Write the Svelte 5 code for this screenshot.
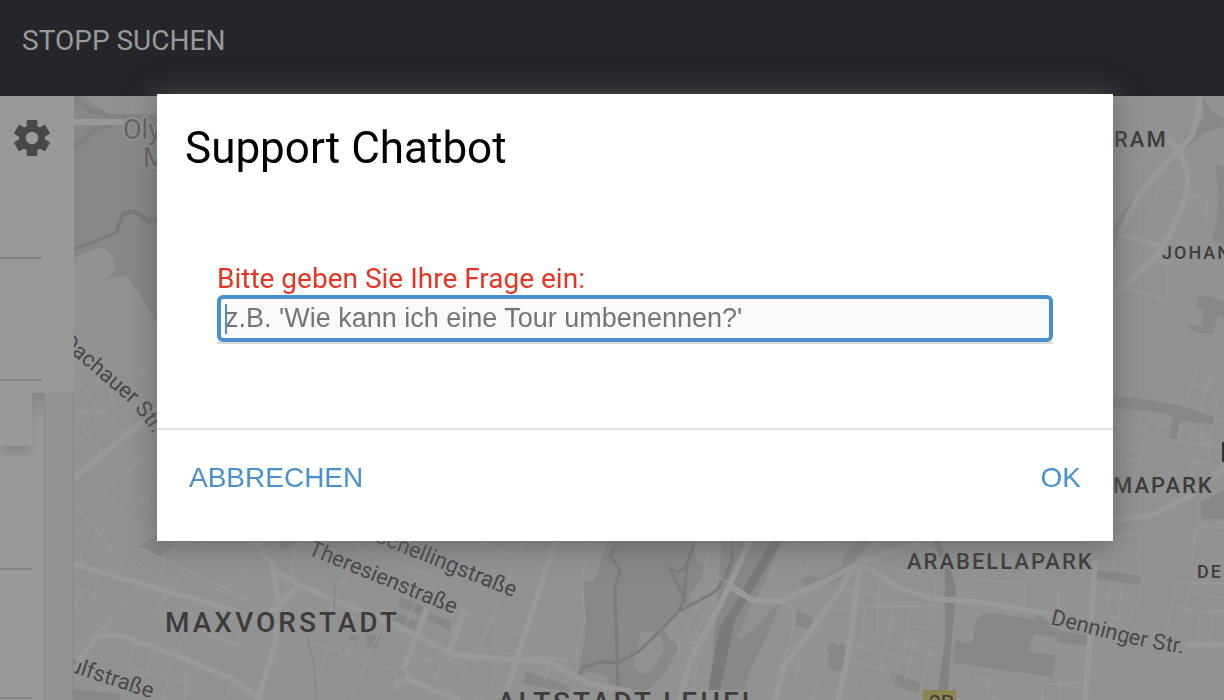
<script>
  let question = $state('');

  const parks = [
    'M74 96H157V322L127 275L105 280L117 268L113 257L104 248L92 250L74 258Z',
    'M74 689L120 694V700H74Z',
    'M138 547L156 534H175L170 550L157 557Z',
    'M276 541H300L284 550Z',
    'M400 597L427 608L424 617L398 606Z',
    'M428 612L452 622L449 630L427 619Z',
    'M395 612L420 622L416 631L392 620Z',
    'M366 634L382 634L376 649L366 645Z',
    'M350 634L360 636L356 641L348 639Z',
    'M526 671L570 686V692L522 684Z',
    'M608 541H692L697 560L705 567L700 580L688 598L695 602L680 607L663 628L668 636L679 648L662 676L648 690H612L576 680L585 640L583 581L594 582Z',
    'M722 541H782L758 595L740 632L735 635L742 639L755 622L780 603L765 640L750 670L744 690H710L715 625Z',
    'M857 541H870L840 580L815 588L805 588L802 580L814 574L817 580L842 567L845 555Z',
    'M796 610L814 618L809 630L795 625Z',
    'M831 641L848 646L845 670L835 671L827 666L829 652L826 650Z',
    'M894 672L922 684L918 693L890 684Z',
    'M975 622L982 614L993 613L1036 620L1038 613L1046 620L1058 630L1087 636V646L1058 642L1057 637L1034 634L1028 650L1033 653L1056 655L1052 677L954 663L955 641L973 643Z',
    'M1097 570L1141 576L1140 585L1096 579Z',
    'M1113 397L1138 398L1178 405L1214 417L1213 424L1181 421L1176 440L1169 438L1173 416L1150 411L1113 408Z',
    'M1204 310H1219L1213 334L1200 333L1187 328L1189 324L1202 327Z',
    'M1199 294L1224 301V318L1195 307Z',
    'M1215 164L1224 167V245L1212 238L1217 220L1219 194Z',
    'M1202 96L1212 112L1224 118V126L1205 132L1196 141L1185 148L1184 137L1197 128L1204 117Z',
    'M1113 226L1143 184L1136 200L1113 249Z',
    'M1200 503L1224 490V519H1202Z'
  ];

  const clearings = [
    'M84 96H157V116H115L98 108Z',
    'M633 665L641 632L660 632L664 650L652 671L643 675Z',
    'M575 682L588 672L606 676L612 690H576Z',
    'M740 632L750 605L778 602L755 629L745 635Z'
  ];

  const water = [
    'M115 230L122 211L135 209L148 218L157 216V221L148 225L134 214L124 216L119 230Z',
    'M771 541H782L735 619L720 690H708L719 629L738 598Z'
  ];

  const motorway = 'M933 541H939L950 566L956 590L954 612L948 690H938L945 640L945 570Z';

  const streams = [
    'M74 249L94 242L119 231',
    'M618 541L610 556L620 570L615 587L618 690',
    'M578 676L584 667L600 662L617 663L638 652L664 627L679 611L697 602L716 591L726 575L732 560V542',
    'M695 541L687 565L684 598L670 569L678 572L688 565',
    'M684 598L679 611'
  ];

  const arterials = [
    'M74 478L135 428L157 410',
    'M74 564L225 608L262 620L300 585',
    'M74 667L97 637L115 634L175 655L230 678L262 700',
    'M254 541L272 563L279 605L276 640L258 700',
    'M272 570L310 590L395 625L455 655L550 662L590 684L630 692',
    'M555 541L536 600L515 665L505 695',
    'M465 610L450 650',
    'M427 608L415 640L395 690',
    'M395 675L460 700',
    'M750 541L720 605L690 660L680 700',
    'M728 585L752 600L780 601L830 579L855 565L900 549L920 545',
    'M855 565L840 590L815 625L785 665L775 700',
    'M860 565L855 600L852 630L845 670L838 700',
    'M862 565L900 588L935 599L980 602L1035 611L1080 622L1110 640',
    'M1095 560L1090 640L1085 700',
    'M1200 96L1198 115L1192 135L1180 149L1155 175L1138 196L1120 234',
    'M1168 139L1180 151L1188 175L1187 194L1170 235L1155 257L1113 296',
    'M1120 234L1160 246',
    'M1113 520L1150 516L1192 495L1224 467',
    'M1185 645L1224 645'
  ];

  const streets = [
    'M74 379L90 394L98 412L82 420L74 426', 'M81 372L88 360M90 394L100 377', 'M110 390L115 411',
    'M74 412H98L106 413L121 433L133 425', 'M106 413V419L74 444', 'M74 418L108 457',
    'M137 377L147 373L152 378H157', 'M128 474L140 460L157 478',
    'M157 457H140L128 470L106 488L107 495L127 516L157 490', 'M90 524L112 505',
    'M74 504L121 560L118 575', 'M97 537L83 551L80 563', 'M74 531L97 537L111 520',
    'M138 547L250 600', 'M165 559L157 590', 'M203 541L155 612', 'M248 570L207 603', 'M262 580L235 645',
    'M185 575L219 590L250 603', 'M74 586L180 622L240 645', 'M100 575L92 596L112 618L105 630',
    'M85 590L74 605', 'M74 605L84 615L108 632', 'M137 588L110 620L74 652', 'M165 595L157 612',
    'M190 625L175 655', 'M135 645L128 668L185 682', 'M153 650L148 672', 'M172 655L163 700',
    'M187 661L185 700', 'M235 682L225 700', 'M210 635L320 680', 'M298 541L285 600L325 615',
    'M360 541L340 590L315 640', 'M355 547L440 580', 'M370 560L350 587', 'M338 582L365 593',
    'M410 653L440 665', 'M455 655L435 675L405 665', 'M300 640L370 660L440 690',
    'M380 630L350 700', 'M330 645L320 670', 'M420 590L400 640',
    'M480 541L535 565', 'M524 541L500 600L478 650', 'M468 613L520 635',
    'M495 627L493 640L497 652L570 660', 'M590 541L582 580L585 620L573 665', 'M550 661L545 680',
    'M465 665L460 690L485 700', 'M496 663L490 693',
    'M710 541L705 570L745 592', 'M700 602L680 640L678 660L683 676', 'M708 607L692 640',
    'M678 642L709 643M686 632L702 637M664 676L685 683M690 659L706 663M697 663L694 690',
    'M800 541L770 575L785 582M828 541L795 580L775 595', 'M838 541L845 553M880 541L860 560',
    'M805 595L830 610M788 601L795 615L790 645L765 700', 'M765 648L785 655',
    'M832 610L863 607L935 606M865 607L862 640M878 606V632L877 642',
    'M815 627L840 646M847 590L878 594M880 582L878 606',
    'M862 630L935 655M892 607L890 632L880 670M910 608L905 650L890 690',
    'M850 645L912 660M850 660L890 672M790 665L820 680L810 700M800 655L795 682M840 675L875 700',
    'M907 616H935M908 625L932 630M905 638L935 645M915 640L905 680M930 650L920 690M862 560L935 578L935 599',
    'M968 541V578L1025 584L1024 605M1070 580L1058 590V610',
    'M960 690L975 679H995L1022 693M987 680V694L1000 700M1042 700V684L1080 683M1060 684V700',
    'M1106 535H1139V575M1120 535L1112 567M1110 585L1108 610M1122 587L1118 618M1140 586L1139 606L1132 608L1130 620L1096 612',
    'M1195 530L1192 562M1224 583H1175L1172 605L1166 630M1187 591L1224 598M1174 605L1200 612L1224 611M1192 583L1185 608M1200 612L1197 642M1213 611L1210 645',
    'M1113 174L1125 181L1150 150L1160 140', 'M1168 187L1192 196H1206L1207 218L1200 235L1175 228L1147 217L1158 192L1168 187',
    'M1155 261L1184 267L1188 261M1127 288L1167 300L1168 265M1177 240L1213 262L1224 264',
    'M1195 373L1224 382M1192 384L1212 390L1217 404L1214 416M1195 373L1185 407M1210 378L1201 410',
    'M1113 425H1127L1172 440L1200 444L1219 445M1147 422L1170 427M1148 422L1137 470L1133 480M1113 446L1138 450M1122 449L1121 460L1138 461M1182 423L1178 438M1193 423L1190 441M1203 424L1202 444M1212 425L1208 462L1192 463V475M1186 464L1192 462M1214 418L1224 421',
    'M1195 497L1199 505L1194 548M1196 526L1224 528M1209 527V532L1224 534'
  ];

  const districts = [
    { name: 'MAXVORSTADT', x: 165, y: 632, size: 'large' },
    { name: 'ALTSTADT-LEHEL', x: 497, y: 712, size: 'large' },
    { name: 'ARABELLAPARK', x: 907, y: 569, size: 'medium' },
    { name: 'RAM', x: 1114, y: 147, size: 'medium' },
    { name: 'MAPARK', x: 1113, y: 493, size: 'medium' },
    { name: 'JOHAN', x: 1162, y: 259, size: 'small' },
    { name: 'DE', x: 1197, y: 578, size: 'small' }
  ];

  const streetNames = [
    { id: 'dachauer', name: 'Dachauer Str.', d: 'M60 344L128 402Q142 415 166 454' },
    { id: 'schelling', name: 'Schellingstraße', d: 'M373 541L562 617' },
    { id: 'theresien', name: 'Theresienstraße', d: 'M307 554L497 632' },
    { id: 'denninger', name: 'Denninger Str.', d: 'M1050 624L1130 644Q1160 650 1220 660' },
    { id: 'arnulf', name: 'ulfstraße', d: 'M68 671L180 708' }
  ];
</script>

<div class="page">
  <header>
    <a class="search" href="#suche">STOPP SUCHEN</a>
  </header>

  <main>
    <aside>
      <section class="tools">
        <button class="settings" aria-label="Einstellungen">
          <svg viewBox="-18 -18 36 36" aria-hidden="true">
            <g fill="#484848">
              <circle r="13" />
              {#each [0, 60, 120] as angle}
                <rect x="-5.3" y="-18" width="10.6" height="36" rx="1" transform="rotate({angle})" />
              {/each}
            </g>
            <circle r="6.2" fill="#999" />
          </svg>
        </button>
        <span class="rule first"></span>
        <span class="rule second"></span>
      </section>
      <section class="list">
        <div class="entries">
          <div class="card"></div>
          <div class="entry"></div>
          <div class="entry next"></div>
        </div>
        <div class="track"></div>
      </section>
    </aside>

    <svg class="map" viewBox="74 96 1150 604" preserveAspectRatio="xMinYMin slice" role="img" aria-label="Karte">
      {#each parks as d}<path {d} fill="#888" />{/each}
      {#each clearings as d}<path {d} fill="#919191" />{/each}
      <path d="M74 98L88 109L112 117L157 118M74 148L92 132L112 124" fill="none" stroke="#828282" stroke-width="6" />
      {#each water as d}<path {d} fill="#7a7a7a" />{/each}
      <path d={motorway} fill="#828282" />
      {#each streams as d}<path {d} class="stream" />{/each}
      {#each streets as d}<path {d} class="street" />{/each}
      {#each arterials as d}<path {d} class="arterial" />{/each}
      <path d="M74 122H124" class="arterial" />
      <path d="M335 583L334 605L341 630M307 635L314 665L316 700" fill="none" stroke="#898989" stroke-width="2" />
      <circle cx="344" cy="649" r="5" class="circus" />
      <circle cx="401" cy="674" r="6" class="circus" />

      <text class="place" x="123" y="139">Oly</text>
      <text class="place" x="143" y="167">M</text>
      {#each streetNames as s}
        <path id={s.id} d={s.d} fill="none" />
        <text class="road"><textPath href="#{s.id}">{s.name}</textPath></text>
      {/each}
      {#each districts as p}
        <text class="district {p.size}" x={p.x} y={p.y}>{p.name}</text>
      {/each}
      <rect x="1222" y="442" width="2" height="20" fill="#333" />
      <rect x="923" y="690" width="33" height="12" fill="#8b8550" />
      <text class="badge" x="929" y="710">2R</text>
    </svg>
  </main>

  <div class="overlay">
    <form class="dialog" role="dialog" aria-labelledby="dialog-title" onsubmit={(e) => e.preventDefault()}>
      <h1 id="dialog-title">Support Chatbot</h1>
      <div class="field">
        <label for="question">Bitte geben Sie Ihre Frage ein:</label>
        <div class="control">
          <input id="question" type="text" placeholder="z.B. 'Wie kann ich eine Tour umbenennen?'" bind:value={question} />
          <span class="caret"></span>
        </div>
      </div>
      <footer>
        <button type="button">ABBRECHEN</button>
        <button type="submit">OK</button>
      </footer>
    </form>
  </div>
</div>

<style>
  :global(body) { margin: 0; }
  * { box-sizing: border-box; }
  .page {
    display: flex;
    flex-direction: column;
    min-height: 100vh;
    max-height: 100vh;
    overflow: hidden;
    font-family: Roboto, sans-serif;
    background: #929292;
  }
  header {
    display: flex;
    flex: none;
    padding: 25px 22px 39px;
    background: #25262b;
  }
  .search {
    color: #999;
    font-size: 28px;
    line-height: 32px;
    text-decoration: none;
  }
  main { display: flex; flex: 1; min-height: 0; }
  aside {
    display: flex;
    flex-direction: column;
    flex: none;
    width: 74px;
    background: #999;
  }
  .tools { display: flex; flex-direction: column; height: 297px; }
  .settings {
    width: 36px;
    height: 36px;
    margin: 24px 0 0 14px;
    padding: 0;
    border: 0;
    background: none;
  }
  .settings svg { display: block; width: 100%; }
  .rule { width: 42px; height: 2px; background: #838383; }
  .first { margin-top: 101px; }
  .second { margin-top: 120px; }
  .list { display: flex; flex: 1; }
  .entries {
    display: flex;
    flex-direction: column;
    width: 44px;
    background: linear-gradient(#878787, #999 28px);
  }
  .card {
    height: 53px;
    width: 32px;
    background: #999;
    box-shadow: 0 8px 12px -4px rgba(0, 0, 0, .2);
  }
  .entry { width: 32px; height: 124px; border-bottom: 2px solid #838383; }
  .next { height: 129px; }
  .track {
    flex: 1;
    background: #959595;
    border: solid #8c8c8c;
    border-width: 0 2px;
  }
  .map { flex: 1; min-width: 0; width: 100%; height: 100%; background: #929292; }
  .stream { fill: none; stroke: #7c7c7c; stroke-width: 3; }
  .street { fill: none; stroke: #999; stroke-width: 1.4; }
  .arterial { fill: none; stroke: #999; stroke-width: 6; stroke-linejoin: round; }
  .circus { fill: #909090; stroke: #999; stroke-width: 2; }
  text { fill: #3c3c3c; paint-order: stroke; stroke: #939393; stroke-width: 4px; stroke-linejoin: round; }
  .road { font-size: 22px; fill: #484848; }
  .place { font-size: 27px; fill: #636363; }
  .district { font-weight: 500; }
  .large { font-size: 28px; letter-spacing: 3px; }
  .medium { font-size: 22px; letter-spacing: 2px; }
  .small { font-size: 18px; letter-spacing: 2px; }
  .badge { font-size: 21px; stroke: none; }
  .overlay {
    position: fixed;
    inset: 0;
    display: flex;
    align-items: flex-start;
    padding: 94px 111px 0 157px;
  }
  .dialog {
    flex: 1;
    min-width: 0;
    background: #fff;
    box-shadow: 0 4px 28px rgba(96, 96, 96, .85);
  }
  h1 {
    margin: 0;
    padding: 28px 28px 0;
    font-size: 44px;
    font-weight: 400;
    line-height: 52px;
    color: #000;
  }
  .field { padding: 88px 60px 84px; }
  label { display: block; color: #ea3323; font-size: 28px; line-height: 33px; }
  .control { position: relative; border-bottom: 2px solid #dadada; }
  input {
    display: block;
    width: 100%;
    height: 47px;
    padding: 0 4px;
    border: 4px solid #4a90cd;
    border-radius: 6px;
    outline: 0;
    background: #f9f9f9;
    font: 27px "Liberation Sans", Arial, sans-serif;
  }
  input::placeholder { color: #757575; opacity: 1; }
  .caret { position: absolute; left: 8px; top: 9px; width: 2px; height: 30px; background: #4a90cd; }
  footer {
    display: flex;
    justify-content: space-between;
    padding: 32px 32px 47px;
    border-top: 2px solid #e3e3e3;
  }
  footer button {
    padding: 0;
    border: 0;
    background: none;
    color: #4a90cd;
    font: 28px/32px "Liberation Sans", Arial, sans-serif;
  }
</style>
